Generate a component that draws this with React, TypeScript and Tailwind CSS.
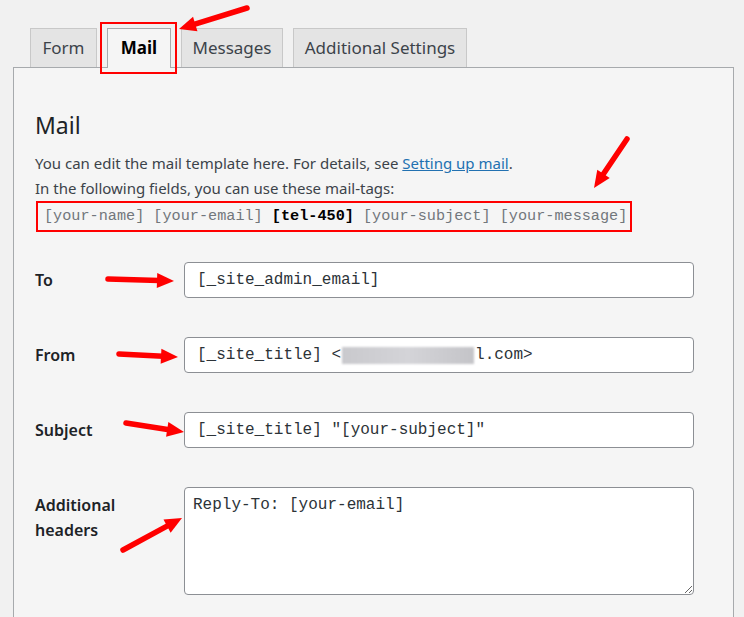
import React from "react";

const sans = "font-['Noto_Sans','Open_Sans',sans-serif]";
const mono = "font-['Liberation_Mono','DejaVu_Sans_Mono',monospace]";

type Pt = [number, number];

// red annotation arrow: tail -> tip
function Arrow({ from, to }: { from: Pt; to: Pt }) {
  const dx = to[0] - from[0];
  const dy = to[1] - from[1];
  const len = Math.hypot(dx, dy);
  const ux = dx / len;
  const uy = dy / len;
  const head = 17;
  const half = 7.5;
  const bx = to[0] - ux * head;
  const by = to[1] - uy * head;
  const pts = [
    `${to[0]},${to[1]}`,
    `${bx - uy * half},${by + ux * half}`,
    `${bx + uy * half},${by - ux * half}`,
  ].join(" ");
  return (
    <g>
      <line x1={from[0]} y1={from[1]} x2={bx + ux * 2} y2={by + uy * 2} stroke="#ff0000" strokeWidth={5.5} strokeLinecap="round" />
      <polygon points={pts} fill="#ff0000" />
    </g>
  );
}

const tabs = [
  { label: "Form", w: "w-[67px]" },
  { label: "Mail", w: "w-[64px]", active: true },
  { label: "Messages", w: "w-[102px]" },
  { label: "Additional Settings", w: "w-[174px]" },
];

function Field({ label, children }: { label: string; children: React.ReactNode }) {
  return (
    <div className="flex items-center">
      <div className={`w-[149px] shrink-0 text-[16px] font-semibold text-[#1d2327] ${sans}`}>{label}</div>
      {children}
    </div>
  );
}

const inputCls = `h-[36px] w-[510px] rounded-[4px] border border-[#8c8f94] bg-white px-[12px] text-[16px] text-[#2c3338] outline-none ${mono}`;

export default function App() {
  return (
    <div className={`relative h-[617px] w-[744px] overflow-hidden bg-[#f1f1f1] pt-[28px] ${sans}`}>
      <div className="relative z-10 -mb-px flex gap-[10px] pl-[30px]">
        {tabs.map((t) =>
          t.active ? (
            <div
              key={t.label}
              className={`${t.w} flex h-[40px] items-center justify-center border border-b-0 border-[#a7aaad] bg-[#f5f5f5] pb-[1px] text-[17px] font-bold text-black`}
            >
              {t.label}
            </div>
          ) : (
            <div
              key={t.label}
              className={`${t.w} flex h-[39px] items-center justify-center border border-b-0 border-[#c8c8c8] bg-[#e4e4e4] pb-[1px] text-[17px] text-[#3c434a]`}
            >
              {t.label}
            </div>
          )
        )}
      </div>

      <div className="ml-[13px] w-[721px] border border-[#a7aaad] bg-[#f5f5f5] pb-[40px] pl-[21px] pt-[42px]">
        <h2 className="text-[23px] leading-[30px] font-normal text-[#1d2327]">Mail</h2>
        <div className="mt-[11px] text-[15px] leading-[25px] text-[#3c434a]">
          <p>
            You can edit the mail template here. For details, see{" "}
            <a className="text-[#2271b1] underline">Setting up mail</a>.
          </p>
          <p>In the following fields, you can use these mail-tags:</p>
          <div className={`ml-[1px] w-[596px] whitespace-nowrap border-2 border-[#ff0000] pl-[6px] text-[15.2px] leading-[27px] text-[#72777c] ${mono}`}>
            [your-name] [your-email] <b className="text-black">[tel-450]</b> [your-subject] [your-message]
          </div>
        </div>

        <div className="mt-[30px] flex flex-col gap-[39px]">
          <Field label="To">
            <input readOnly className={inputCls} value="[_site_admin_email]" />
          </Field>
          <Field label="From">
            <div className={`${inputCls} flex items-center whitespace-pre`}>
              <span>[_site_title] &lt;</span>
              <span className="mx-[1px] inline-block h-[17px] w-[132px] bg-gradient-to-r from-[#c9c9cd] via-[#d4d4d8] to-[#c4c4c8] blur-[1px]" />
              <span>l.com&gt;</span>
            </div>
          </Field>
          <Field label="Subject">
            <input readOnly className={inputCls} value={'[_site_title] "[your-subject]"'} />
          </Field>
          <div className="flex items-start">
            <div className="w-[149px] shrink-0 pt-[6px] text-[16px] leading-[25px] font-semibold text-[#1d2327]">
              Additional
              <br />
              headers
            </div>
            <textarea
              readOnly
              className={`h-[108px] w-[510px] resize rounded-[4px] border border-[#8c8f94] bg-white px-[8px] py-[5px] text-[16px] leading-[24px] text-[#2c3338] outline-none ${mono}`}
              defaultValue="Reply-To: [your-email]"
            />
          </div>
        </div>
      </div>

      {/* annotations */}
      <div className="pointer-events-none absolute left-[100px] top-[22px] z-20 h-[52px] w-[77px] border-2 border-[#ff0000]" />
      <svg className="pointer-events-none absolute left-0 top-0 z-30" width={744} height={617}>
        <Arrow from={[247, 8]} to={[179, 29]} />
        <Arrow from={[627, 139]} to={[594, 188]} />
        <Arrow from={[108, 279]} to={[174, 281]} />
        <Arrow from={[119, 354]} to={[178, 357]} />
        <Arrow from={[126, 423]} to={[184, 432]} />
        <Arrow from={[123, 550]} to={[182, 518]} />
      </svg>
    </div>
  );
}
